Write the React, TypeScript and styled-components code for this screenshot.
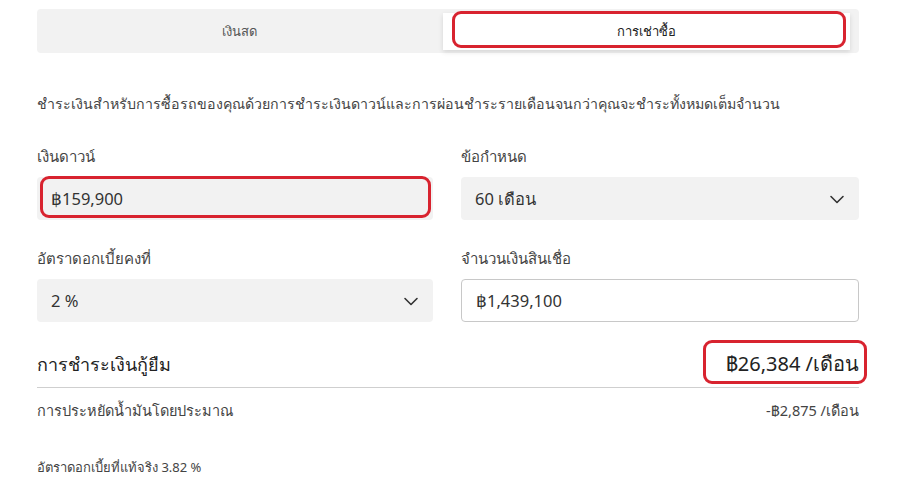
import React from "react";
import styled, { createGlobalStyle } from "styled-components";

const Global = createGlobalStyle`
  html, body { margin: 0; padding: 0; background: #ffffff; }
  body { font-family: "Noto Sans", "Open Sans", sans-serif; color: #333; }
  * { box-sizing: border-box; }
`;

const Page = styled.div`
  width: 897px;
  padding: 9px 38px 0 37px;
`;

const TabBar = styled.div`
  position: relative;
  display: grid;
  grid-template-columns: 405px 1fr;
  height: 44px;
  background: #f2f2f2;
  border-radius: 4px;
`;

const Tab = styled.div<{ $active?: boolean }>`
  display: flex;
  align-items: center;
  justify-content: center;
  font-size: 13px;
  color: ${(p) => (p.$active ? "#222" : "#555")};
  ${(p) =>
    p.$active
      ? `
    background: #fff;
    margin: 4px 9px 3px 1px;
    box-shadow: 0 2px 5px rgba(0,0,0,0.12);
  `
      : ""}
`;

const Highlight = styled.div<{ $l: number; $t: number; $w: number; $h: number }>`
  position: absolute;
  left: ${(p) => p.$l}px;
  top: ${(p) => p.$t}px;
  width: ${(p) => p.$w}px;
  height: ${(p) => p.$h}px;
  border: 3px solid #d8232f;
  border-radius: 9px;
  pointer-events: none;
`;

const Description = styled.p`
  margin: 41px 0 0;
  font-size: 14.2px;
  line-height: 20px;
  color: #444;
`;

const Grid = styled.div`
  display: grid;
  grid-template-columns: 396px 398px;
  column-gap: 28px;
  row-gap: 28px;
  margin-top: 32px;
`;

const Field = styled.div`
  position: relative;
  display: flex;
  flex-direction: column;
  gap: 11px;
`;

const Label = styled.div`
  font-size: 15px;
  line-height: 20px;
  color: #444;
`;

const Box = styled.div<{ $outlined?: boolean }>`
  display: flex;
  align-items: center;
  justify-content: space-between;
  height: 43px;
  padding: 0 14px;
  border-radius: 4px;
  font-size: 16.5px;
  color: #333;
  background: ${(p) => (p.$outlined ? "#fff" : "#f2f2f2")};
  border: ${(p) => (p.$outlined ? "1px solid #c8c8c8" : "none")};
`;

const Chevron = () => (
  <svg width="16" height="16" viewBox="0 0 16 16" fill="none">
    <path d="M2 5.5 L8 11.5 L14 5.5" stroke="#333" strokeWidth="1.6" strokeLinecap="round" strokeLinejoin="round" />
  </svg>
);

const ResultRow = styled.div`
  position: relative;
  display: flex;
  align-items: center;
  justify-content: space-between;
  margin-top: 29px;
  padding-bottom: 10px;
  border-bottom: 1px solid #cfcfcf;
`;

const ResultTitle = styled.div`
  font-size: 18px;
  line-height: 26px;
  color: #222;
`;

const ResultValue = styled.div`
  font-size: 20px;
  line-height: 26px;
  color: #222;
`;

const SavingsRow = styled.div`
  display: flex;
  justify-content: space-between;
  align-items: center;
  margin-top: 12px;
  font-size: 14.5px;
  line-height: 20px;
  color: #444;
`;

const Footnote = styled.div`
  margin-top: 38px;
  font-size: 13px;
  line-height: 18px;
  color: #444;
`;

export default function App() {
  return (
    <>
      <Global />
      <Page>
        <TabBar>
          <Tab>เงินสด</Tab>
          <Tab $active>การเช่าซื้อ</Tab>
          <Highlight $l={415} $t={2} $w={394} $h={37} />
        </TabBar>
        <Description>
          ชำระเงินสำหรับการซื้อรถของคุณด้วยการชำระเงินดาวน์และการผ่อนชำระรายเดือนจนกว่าคุณจะชำระทั้งหมดเต็มจำนวน
        </Description>
        <Grid>
          <Field>
            <Label>เงินดาวน์</Label>
            <Box>฿159,900</Box>
            <Highlight $l={3} $t={30} $w={391} $h={42} />
          </Field>
          <Field>
            <Label>ข้อกำหนด</Label>
            <Box>
              60 เดือน
              <Chevron />
            </Box>
          </Field>
          <Field>
            <Label>อัตราดอกเบี้ยคงที่</Label>
            <Box>
              2 %
              <Chevron />
            </Box>
          </Field>
          <Field>
            <Label>จำนวนเงินสินเชื่อ</Label>
            <Box $outlined>฿1,439,100</Box>
          </Field>
        </Grid>
        <ResultRow>
          <ResultTitle>การชำระเงินกู้ยืม</ResultTitle>
          <ResultValue>฿26,384 /เดือน</ResultValue>
          <Highlight $l={666} $t={-11} $w={164} $h={44} />
        </ResultRow>
        <SavingsRow>
          <span>การประหยัดน้ำมันโดยประมาณ</span>
          <span>-฿2,875 /เดือน</span>
        </SavingsRow>
        <Footnote>อัตราดอกเบี้ยที่แท้จริง 3.82 %</Footnote>
      </Page>
    </>
  );
}
